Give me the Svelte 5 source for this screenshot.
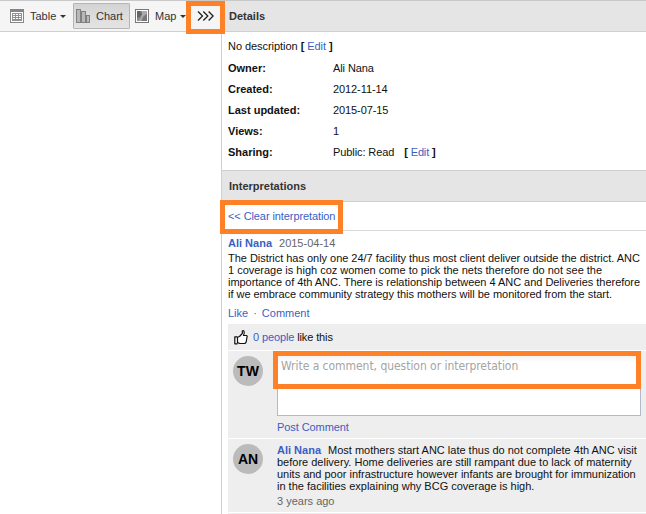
<script>
  const details = [
    ['Owner:', 'Ali Nana'],
    ['Created:', '2012-11-14'],
    ['Last updated:', '2015-07-15'],
    ['Views:', '1'],
  ];
</script>

<div class="app">
  <header>
    <div class="toolbar">
      <div class="btn table">
        <svg width="14" height="14" viewBox="0 0 14 14" shape-rendering="crispEdges">
          <rect x=".5" y=".5" width="13" height="13" fill="#fff" stroke="#888" />
          <rect x="0" y="0" width="14" height="3" fill="#858585" />
          <rect x="2" y="4" width="10" height="8" fill="#929292" />
          <path d="M3 5.5h2m1 0h2m1 0h2M3 7.500h2m1 0h2m1 0h2M3 9.500h2m1 0h2m1 0h2" stroke="#fff" />
        </svg>
        <span>Table</span><i class="caret"></i>
      </div>
      <div class="btn chart">
        <svg width="14" height="14" viewBox="0 0 14 14" shape-rendering="crispEdges">
          <g fill="#b8b8b8" stroke="#808080">
            <rect x=".5" y=".5" width="4" height="13" />
            <rect x="5.5" y="2.5" width="4" height="11" />
            <rect x="10.5" y="6.5" width="3" height="7" />
          </g>
        </svg>
        <span>Chart</span>
      </div>
      <div class="btn map">
        <svg width="14" height="14" viewBox="0 0 14 14">
          <rect x=".5" y=".5" width="13" height="13" fill="#fff" stroke="#777" />
          <rect x="2" y="2" width="10" height="10" fill="#8c8c8c" />
          <path d="M2 2h3l2 3-2 3-3 1z" fill="#666" />
          <path d="M7 2h5v2L8 8 6 12H4l3-6z" fill="#aaa" />
          <path d="M8 8l4-3v7H7z" fill="#787878" />
        </svg>
        <span>Map</span><i class="caret"></i>
      </div>
      <div class="btn more">
        <svg width="18" height="10" viewBox="0 0 18 10" fill="none" stroke="#222" stroke-width="1.3">
          <path d="M1 .5L5.5 5 1 9.5M6.300 .5L10.800 5 6.300 9.500M11.600 .5L16.100 5 11.600 9.500" />
        </svg>
        <b class="mark mark-more"></b>
      </div>
    </div>
    <h2>Details</h2>
  </header>
  <main>
    <div class="canvas"></div>
    <aside>
      <section class="details">
        <p class="desc">No description <b>[</b> <a>Edit</a> <b>]</b></p>
        {#each details as [label, value]}
          <div class="row"><b>{label}</b><span>{value}</span></div>
        {/each}
        <div class="row"><b>Sharing:</b><span>Public: Read</span><em><b>[</b> <a>Edit</a> <b>]</b></em></div>
      </section>
      <h2 class="mid">Interpretations</h2>
      <div class="clear"><a>&lt;&lt; Clear interpretation</a><b class="mark mark-clear"></b></div>
      <article>
        <div class="by"><a class="name">Ali Nana</a><time>2015-04-14</time></div>
        <div class="text">
          <div class="l1">The District has only one 24/7 facility thus most client deliver outside the district. ANC</div>
          <div class="l2">1 coverage is high coz women come to pick the nets therefore do not see the</div>
          <div class="l3">importance of 4th ANC. There is relationship between 4 ANC and Deliveries therefore</div>
          <div class="l4">if we embrace community strategy this mothers will be monitored from the start.</div>
        </div>
        <div class="actions"><a>Like</a><span>·</span><a>Comment</a></div>
        <div class="likes">
          <svg width="14" height="15" viewBox="0 0 14 15" fill="#fff" stroke="#111" stroke-width="1.2" stroke-linejoin="round">
            <path d="M3.500 13.200V7.200L5.500 6.500 8.300 3.500V1.200Q9 .2 10 1.200 10.700 2.800 9.500 5.500H12.500Q13.700 6.200 12.900 7.500L12.200 12Q11.500 13.600 10.300 13.500H6L3.500 12.600M3.500 6.800H.8V13.800H3.500" />
          </svg>
          <span><a>0 people</a> like this</span>
        </div>
        <div class="block write">
          <div class="avatar">TW</div>
          <div class="body">
            <div class="input">Write a comment, question or interpretation<b class="mark mark-input"></b></div>
            <a class="post">Post Comment</a>
          </div>
        </div>
        <div class="block comment">
          <div class="avatar">AN</div>
          <div class="body">
            <div class="c1"><a class="name">Ali Nana</a>Most mothers start ANC late thus do not complete 4th ANC visit</div>
            <div class="c2">before delivery. Home deliveries are still rampant due to lack of maternity</div>
            <div class="c3">units and poor infrastructure however infants are brought for immunization</div>
            <div class="c4">in the facilities explaining why BCG coverage is high.</div>
            <div class="ago">3 years ago</div>
          </div>
        </div>
        <div class="next"></div>
      </article>
    </aside>
  </main>
</div>

<style>
  .app { width: 646px; height: 514px; overflow: hidden; background: #fff; color: #111; font: 11px/12px "Liberation Sans", Arial, sans-serif; display: flex; flex-direction: column; white-space: nowrap; }
  * { box-sizing: border-box; }
  a { color: #3a5fc4; }
  header { display: flex; height: 32px; flex: none; border-top: 1px solid #c9c9c9; border-bottom: 1px solid #d0d0d0; }
  .toolbar { width: 222px; background: #f5f5f5; display: flex; align-items: center; padding-left: 4px; color: #333; }
  .btn { height: 26px; display: flex; align-items: center; position: relative; }
  .btn svg { flex: none; }
  .table { width: 69px; padding-left: 6px; }
  .btn span { margin-left: 6px; }
  .caret { width: 0; height: 0; border: 3px solid transparent; border-top-color: #333; border-bottom: 0; margin-left: 4px; }
  .chart { width: 57px; border: 1px solid #b5b5b5; border-radius: 1px; background: linear-gradient(#d4d4d4, #e4e4e4); padding-left: 2px; }
  .map { width: 56px; padding-left: 5px; }
  .more { width: 36px; padding-left: 11px; }
  h2 { margin: 0; flex: 1; background: #e5e5e5; color: #333; font-size: 11px; line-height: 30px; padding-left: 7px; }
  main { display: flex; flex: 1; min-height: 0; }
  .canvas { width: 221px; flex: none; }
  aside { flex: 1; border-left: 1px solid #d0d0d0; min-width: 0; }
  .details { height: 138px; padding: 8px 0 0 6px; }
  .desc { margin: 0; line-height: 13px; height: 18px; letter-spacing: -.05px; }
  .row { display: flex; height: 21px; line-height: 21px; }
  .row > b { width: 105px; }
  .row > span { letter-spacing: -.09px; }
  em { font-style: normal; margin-left: 10px; letter-spacing: -.15px; }
  .mid { border: solid #d0d0d0; border-width: 1px 0; height: 32px; }
  .clear { position: relative; height: 29px; line-height: 28px; padding-left: 6px; border-bottom: 1px solid #d9d9d9; letter-spacing: -.09px; }
  .mark { position: absolute; border: 5px solid #ff8127; }
  .mark-more { left: 0; top: -2px; width: 39px; height: 33px; }
  .mark-clear { left: -2px; top: -2px; width: 123px; height: 34px; z-index: 1; }
  .mark-input { left: -5px; top: -5px; width: 368px; height: 38px; }
  article { padding-left: 6px; }
  .by { padding-top: 6px; height: 21px; }
  .name { font-weight: bold; margin-right: 7px; }
  time, .ago, .actions span { color: #666; }
  .text { height: 48px; }
  .l1 { letter-spacing: -.03px; }
  .l2 { letter-spacing: -.01px; }
  .l3 { letter-spacing: -.035px; }
  .l4 { letter-spacing: -.03px; }
  .actions { height: 24px; padding-top: 7px; }
  .actions span { margin: 0 5px; }
  .likes { height: 26px; background: #eee; display: flex; align-items: center; padding-left: 6px; }
  .likes span { margin-left: 5px; letter-spacing: -.12px; }
  .block { background: #eee; margin-top: 1px; display: flex; padding-left: 5px; }
  .avatar { width: 30px; height: 30px; border-radius: 50%; background: #bbb; color: #000; font: bold 14px/30px "Liberation Sans", Arial, sans-serif; text-align: center; margin: 5px 14px 0 0; flex: none; }
  .write { height: 87px; }
  .comment { height: 73px; }
  .write .body { padding-top: 4px; }
  .input { position: relative; width: 364px; height: 61px; border: 1px solid #b5b8c8; background: linear-gradient(#f4f4f4, #fff 7px); color: #a4a4a4; font: 12px/14px "DejaVu Sans Condensed", "DejaVu Sans", sans-serif; letter-spacing: -.04px; padding: 3px; }
  .post { display: block; margin-top: 5px; letter-spacing: -.08px; }
  .comment .body { padding-top: 5px; }
  .c3 { letter-spacing: -.02px; }
  .ago { margin-top: 3px; }
  .next { height: 5px; margin-top: 1px; background: #eee; }
</style>
